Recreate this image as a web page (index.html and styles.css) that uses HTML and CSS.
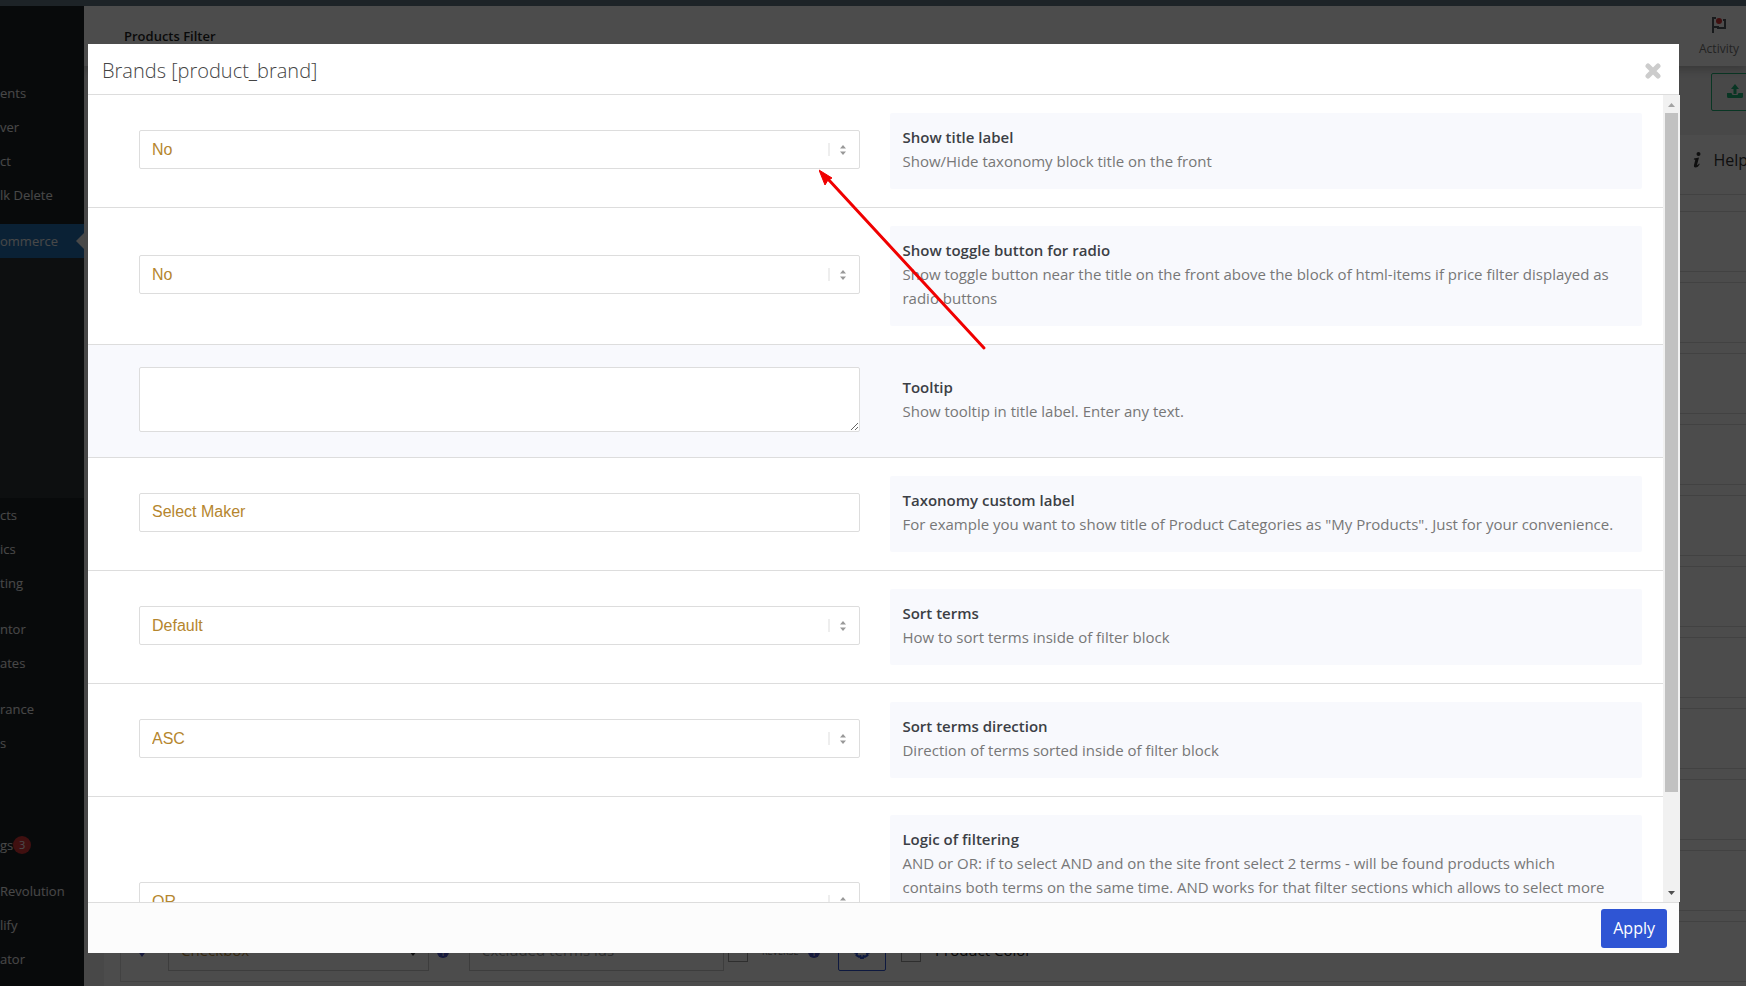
FILE: index.html
```html
<!DOCTYPE html>
<html lang="en">
<head>
    <meta charset="UTF-8">
    <meta name="viewport" content="width=device-width, initial-scale=1.0">
    <title>Products Filter</title>
    <link rel="stylesheet" href="styles.css">
</head>
<body>
    <div class="admin-bar"></div>

    <div class="admin">
        <!-- Admin menu -->
        <nav class="menu">
            <a class="menu-item" href="#">ents</a>
            <a class="menu-item" href="#">ver</a>
            <a class="menu-item" href="#">ct</a>
            <a class="menu-item" href="#">lk Delete</a>
            <div class="menu-sep"></div>
            <a class="menu-item current" href="#">ommerce</a>
            <div class="submenu"></div>
            <a class="menu-item" href="#">cts</a>
            <a class="menu-item" href="#">ics</a>
            <a class="menu-item" href="#">ting</a>
            <div class="menu-sep"></div>
            <a class="menu-item" href="#">ntor</a>
            <a class="menu-item" href="#">ates</a>
            <div class="menu-sep"></div>
            <a class="menu-item" href="#">rance</a>
            <a class="menu-item" href="#">s</a>
            <div class="menu-blank"></div>
            <a class="menu-item" href="#">gs<span class="menu-count">3</span></a>
            <div class="menu-sep"></div>
            <a class="menu-item" href="#">Revolution</a>
            <a class="menu-item" href="#">lify</a>
            <a class="menu-item" href="#">ator</a>
        </nav>

        <div class="content">
            <header class="page-header">
                <h1>Products Filter</h1>
                <button class="activity" type="button">
                    <svg width="16" height="18" viewBox="0 0 16 18">
                        <path d="M2 17V2h3M2 11h5v1h7V4h-2" fill="none" stroke="#50575e" stroke-width="2"/>
                        <circle cx="8" cy="5" r="3" fill="#d63638"/>
                    </svg>
                    Activity
                </button>
            </header>

            <div class="toolbar">
                <button class="upload-btn" type="button" aria-label="Upload">
                    <svg width="16" height="14" viewBox="0 0 16 14">
                        <path d="M8 0l4 5H9.500v5h-3V5H4zM0 9h4.500l1 2h5l1-2H16v3.500q0 1.500-1.500 1.500h-13Q0 14 0 12.500z" fill="#20b578"/>
                    </svg>
                </button>
            </div>

            <div class="panel">
                <div class="tabs">
                    <a class="tab" href="#">
                        <svg width="8" height="16" viewBox="0 0 8 16">
                            <circle cx="5.500" cy="2" r="2" fill="#333"/>
                            <path d="M1 6.500l5-1-2 7.500q1 0 2-1.500l.8.5Q5 15.500 2.500 15.500 .5 15.500 1 13l1.300-5.200L.8 7.500z" fill="#333"/>
                        </svg>
                        Help
                    </a>
                </div>
                <div class="cards">
                    <div class="card"></div>
                    <div class="card"></div>
                    <div class="card"></div>
                    <div class="card"></div>
                    <div class="card"></div>
                    <div class="card"></div>
                    <div class="card"></div>
                    <div class="card"></div>
                    <div class="card"></div>
                    <div class="card"></div>
                    <div class="card filter-row">
                        <svg class="handle" width="10" height="14" viewBox="0 0 10 14"><path d="M0 5h10L5 12z" fill="#4b56c8"/></svg>
                        <div class="row-select">
                            <select aria-label="Type"><option>Checkbox</option></select>
                            <svg class="row-caret" width="8" height="6" viewBox="0 0 8 6"><path d="M0 1h8L4 6z" fill="#333"/></svg>
                        </div>
                        <span class="info">i</span>
                        <input class="row-input" type="text" placeholder="excluded terms ids" aria-label="Excluded terms">
                        <input class="row-check" type="checkbox" id="reverse">
                        <label class="row-reverse" for="reverse">REVERSE</label>
                        <span class="info">i</span>
                        <button class="gear-btn" type="button" aria-label="Settings">
                            <svg width="16" height="16" viewBox="0 0 16 16">
                                <path d="M6.500 1h3l.5 2 2-.8 2 2.300-1.200 1.700L15 7.500v2l-2 .8.500 2-2.200 1.400L9.500 13l-.5 2H7l-.5-2-1.800.7-2.200-1.400.5-2-2-.8v-2l2.200-1.300L2 4.500l2-2.300 2 .8z" fill="none" stroke="#2f55d4" stroke-width="2"/>
                            </svg>
                        </button>
                        <input class="row-check" type="checkbox" id="product-color">
                        <label class="row-name" for="product-color">Product Color</label>
                    </div>
                </div>
            </div>
        </div>
    </div>

    <div class="overlay"></div>

    <!-- Filter settings popup -->
    <div class="modal" role="dialog" aria-labelledby="modal-title">
        <div class="modal-header">
            <h2 id="modal-title">Brands [product_brand]</h2>
            <button class="close-btn" type="button" aria-label="Close">
                <svg width="16" height="16" viewBox="0 0 16 16">
                    <path d="M3 3l10 10M13 3L3 13" fill="none" stroke="#ccc" stroke-width="5" stroke-linecap="round"/>
                </svg>
            </button>
        </div>

        <div class="modal-body">
            <div class="settings">
                <div class="setting">
                    <div class="field">
                        <select id="show-title"><option>No</option><option>Yes</option></select>
                        <svg class="arrows" width="18" height="16" viewBox="0 0 18 16"><path d="M1 1v13" stroke="#ddd"/><path d="M12 6.500l3-3.500 3 3.500zM12 9.500l3 3.500 3-3.500z" fill="#999"/></svg>
                    </div>
                    <div class="desc">
                        <label for="show-title">Show title label</label>
                        <p>Show/Hide taxonomy block title on the front</p>
                    </div>
                </div>

                <div class="setting">
                    <div class="field">
                        <select id="show-toggle"><option>No</option><option>Yes</option></select>
                        <svg class="arrows" width="18" height="16" viewBox="0 0 18 16"><path d="M1 1v13" stroke="#ddd"/><path d="M12 6.500l3-3.500 3 3.500zM12 9.500l3 3.500 3-3.500z" fill="#999"/></svg>
                    </div>
                    <div class="desc">
                        <label for="show-toggle">Show toggle button for radio</label>
                        <p>Show toggle button near the title on the front above the block of html-items if price filter displayed as radio buttons</p>
                    </div>
                </div>

                <div class="setting hovered">
                    <div class="field">
                        <textarea id="tooltip"></textarea>
                    </div>
                    <div class="desc">
                        <label for="tooltip">Tooltip</label>
                        <p>Show tooltip in title label. Enter any text.</p>
                    </div>
                </div>

                <div class="setting">
                    <div class="field">
                        <input type="text" id="custom-label" value="Select Maker">
                    </div>
                    <div class="desc">
                        <label for="custom-label">Taxonomy custom label</label>
                        <p>For example you want to show title of Product Categories as "My Products". Just for your convenience.</p>
                    </div>
                </div>

                <div class="setting">
                    <div class="field">
                        <select id="sort-terms"><option>Default</option></select>
                        <svg class="arrows" width="18" height="16" viewBox="0 0 18 16"><path d="M1 1v13" stroke="#ddd"/><path d="M12 6.500l3-3.500 3 3.500zM12 9.500l3 3.500 3-3.500z" fill="#999"/></svg>
                    </div>
                    <div class="desc">
                        <label for="sort-terms">Sort terms</label>
                        <p>How to sort terms inside of filter block</p>
                    </div>
                </div>

                <div class="setting">
                    <div class="field">
                        <select id="sort-direction"><option>ASC</option><option>DESC</option></select>
                        <svg class="arrows" width="18" height="16" viewBox="0 0 18 16"><path d="M1 1v13" stroke="#ddd"/><path d="M12 6.500l3-3.500 3 3.500zM12 9.500l3 3.500 3-3.500z" fill="#999"/></svg>
                    </div>
                    <div class="desc">
                        <label for="sort-direction">Sort terms direction</label>
                        <p>Direction of terms sorted inside of filter block</p>
                    </div>
                </div>

                <div class="setting">
                    <div class="field">
                        <select id="logic"><option>OR</option><option>AND</option></select>
                        <svg class="arrows" width="18" height="16" viewBox="0 0 18 16"><path d="M1 1v13" stroke="#ddd"/><path d="M12 6.500l3-3.500 3 3.500zM12 9.500l3 3.500 3-3.500z" fill="#999"/></svg>
                    </div>
                    <div class="desc desc-long">
                        <label for="logic">Logic of filtering</label>
                        <p>AND or OR: if to select AND and on the site front select 2 terms - will be found products which<br>contains both terms on the same time. AND works for that filter sections which allows to select more</p>
                    </div>
                </div>
            </div>

            <div class="scrollbar" aria-hidden="true">
                <svg width="17" height="17" viewBox="0 0 17 17"><path d="M5 11h7L8.500 7z" fill="#a3a3a3"/></svg>
                <div class="scroll-track"><div class="scroll-thumb"></div></div>
                <svg width="17" height="17" viewBox="0 0 17 17"><path d="M5 6h7l-3.500 4z" fill="#505050"/></svg>
            </div>
        </div>

        <div class="modal-footer">
            <button class="apply-btn" type="button">Apply</button>
        </div>
    </div>

    <!-- Pointer to the first option -->
    <svg class="pointer" width="170" height="184" viewBox="0 0 170 184">
        <path d="M165 179L9 10" stroke="#f00000" stroke-width="3" stroke-linecap="round"/>
        <path d="M0 1l13 8-4 2-3 5z" fill="#f00000" stroke="#f00000"/>
    </svg>
</body>
</html>
```

FILE: styles.css
```css
* {
    margin: 0;
    padding: 0;
    box-sizing: border-box;
}

body {
    background: #f0f0f1;
    height: 100vh;
    overflow: hidden;
    display: flex;
    flex-direction: column;
    font-family: "Open Sans", sans-serif;
    font-size: 15px;
}

button,
input,
select,
textarea {
    font-family: inherit;
    font-size: inherit;
}

a {
    text-decoration: none;
}

.admin-bar {
    flex: none;
    height: 6px;
    background: #1d2327;
    position: relative;
    z-index: 20;
}

.admin {
    flex: 1;
    min-height: 0;
    display: flex;
}

/* Admin menu */
.menu {
    flex: none;
    width: 84px;
    padding-top: 70px;
    background: #1d2327;
    overflow: hidden;
}

.menu-item {
    display: flex;
    align-items: center;
    height: 34px;
    color: #f0f0f1;
    font-size: 13px;
    white-space: nowrap;
}

.menu-item.current {
    background: #2271b1;
    position: relative;
}

.menu-item.current::after {
    content: "";
    position: absolute;
    right: 0;
    top: 9px;
    border: 8px solid transparent;
    border-left-width: 0;
    border-right-color: #f0f0f1;
}

.menu-sep {
    height: 12px;
}

.menu-blank {
    height: 68px;
}

.submenu {
    height: 240px;
    background: #2c3338;
}

.menu-count {
    width: 18px;
    height: 18px;
    border-radius: 50%;
    background: #d63638;
    color: #fff;
    font-size: 11px;
    line-height: 18px;
    text-align: center;
}

/* Page behind the popup */
.content {
    flex: 1;
    min-width: 0;
    overflow: hidden;
}

.page-header {
    display: flex;
    align-items: center;
    justify-content: space-between;
    height: 60px;
    padding: 0 7px 0 40px;
    background: #fff;
    box-shadow: 0 4px 8px rgba(0, 0, 0, 0.2);
    position: relative;
}

.page-header h1 {
    font-size: 13px;
    font-weight: 600;
    color: #1e1e1e;
}

.activity {
    display: flex;
    flex-direction: column;
    align-items: center;
    gap: 6px;
    border: none;
    background: none;
    color: #757575;
    font-size: 12px;
}

.toolbar {
    display: flex;
    justify-content: flex-end;
    height: 69px;
    padding-top: 7px;
}

.upload-btn {
    width: 55px;
    height: 38px;
    margin-right: -20px;
    padding-left: 15px;
    border: 1px solid #20b578;
    border-radius: 2px;
    background: none;
    text-align: left;
}

.panel {
    margin-left: 20px;
    background: #fff;
}

.tabs {
    display: flex;
    justify-content: flex-end;
    height: 60px;
    border-bottom: 1px solid #ddd;
}

.tab {
    display: flex;
    align-items: center;
    gap: 12px;
    margin-right: -2px;
    padding-bottom: 9px;
    color: #333;
    font-size: 16px;
}

.tab svg {
    flex: none;
}

.cards {
    display: flex;
    flex-direction: column;
    gap: 10px;
    padding: 16px 0 10px 16px;
}

.card {
    height: 61px;
    border: 1px solid #ddd;
    border-right: none;
}

.filter-row {
    display: flex;
    align-items: center;
    padding-left: 16px;
}

.handle {
    margin-right: 21px;
}

.row-select {
    position: relative;
    width: 261px;
    margin-right: 8px;
}

.row-select select,
.row-input {
    width: 100%;
    height: 39px;
    padding: 0 12px 4px;
    border: 1px solid #ccc;
    background: #fff;
    color: #b48a3c;
    appearance: none;
}

.row-caret {
    position: absolute;
    right: 12px;
    top: 18px;
}

.info {
    width: 12px;
    height: 12px;
    border-radius: 50%;
    background: #4b56c8;
    color: #fff;
    font-size: 10px;
    line-height: 12px;
    text-align: center;
}

.row-input {
    width: 255px;
    margin: 0 4px 0 20px;
}

.row-input::placeholder {
    color: #999;
}

.row-check {
    width: 20px;
    height: 20px;
    border: 1px solid #999;
    appearance: none;
}

.row-reverse {
    width: 36px;
    margin: 0 10px 0 14px;
    color: #777;
    font-size: 9px;
}

.gear-btn {
    width: 48px;
    height: 39px;
    margin: 0 15px 0 18px;
    padding-bottom: 4px;
    border: 1px solid #2f55d4;
    border-radius: 2px;
    background: none;
}

.gear-btn svg {
    vertical-align: middle;
}

.row-name {
    margin-left: 14px;
    padding-bottom: 4px;
    color: #222;
}

.overlay {
    position: fixed;
    inset: 0;
    z-index: 10;
    background: rgba(0, 0, 0, 0.7);
}

/* Popup */
.modal {
    position: fixed;
    top: 44px;
    right: 67px;
    bottom: 33px;
    left: 88px;
    z-index: 30;
    display: flex;
    flex-direction: column;
    background: #fff;
}

.modal-header {
    flex: none;
    display: flex;
    align-items: center;
    justify-content: space-between;
    height: 51px;
    padding: 3px 18px 0 14px;
    border-bottom: 1px solid #ddd;
}

.modal-header h2 {
    color: #444;
    font-size: 20px;
    font-weight: 300;
}

.close-btn {
    display: flex;
    border: none;
    background: none;
    cursor: pointer;
}

.modal-body {
    flex: 1;
    min-height: 0;
    display: flex;
    margin-right: -1px;
}

.settings {
    flex: 1;
    overflow: hidden;
}

.setting {
    display: grid;
    grid-template-columns: 48fr 50fr;
    align-items: center;
    gap: 30px;
    padding: 18px 21px 18px 51px;
    border-bottom: 1px solid #ddd;
}

.setting.hovered {
    background: #f8f9fd;
}

.field {
    position: relative;
    padding-bottom: 4px;
}

.field select,
.field input,
.field textarea {
    display: block;
    width: 100%;
    height: 39px;
    padding: 0 12px;
    border: 1px solid #ddd;
    border-radius: 2px;
    background: #fff;
    color: #b5862e;
    font-family: "Liberation Sans", sans-serif;
    font-size: 16px;
    appearance: none;
}

.field textarea {
    height: 65px;
    padding: 8px 12px;
    resize: vertical;
}

.arrows {
    position: absolute;
    right: 14px;
    top: 12px;
    pointer-events: none;
}

.desc {
    padding: 12px 12px 16px;
    border-radius: 2px;
    background: #f8f9fd;
    line-height: 24px;
}

.desc-long {
    min-height: 176px;
}

.desc label {
    display: block;
    color: #3c3f45;
    font-weight: 600;
}

.desc p {
    color: #777;
}

.scrollbar {
    flex: none;
    display: flex;
    flex-direction: column;
    width: 17px;
    padding-top: 1px;
    background: #f1f1f1;
}

.scroll-track {
    flex: 1;
    padding: 0 2px;
}

.scroll-thumb {
    height: 88%;
    background: #c1c1c1;
}

.modal-footer {
    flex: none;
    display: flex;
    align-items: center;
    justify-content: flex-end;
    height: 51px;
    padding: 0 12px;
    border-top: 1px solid #ddd;
    background: #fcfcfc;
}

.apply-btn {
    height: 39px;
    padding: 0 12px;
    border: none;
    border-radius: 3px;
    background: #2f55d4;
    color: #fff;
    font-size: 16px;
    cursor: pointer;
}

.pointer {
    position: absolute;
    left: 819px;
    top: 169px;
    z-index: 40;
    fill: none;
    pointer-events: none;
}
```
